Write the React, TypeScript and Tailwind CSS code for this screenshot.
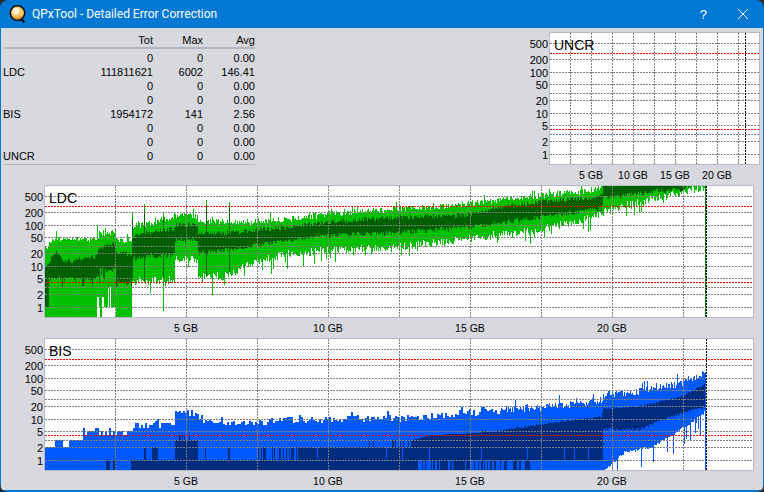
import React from "react";

// small seeded random so the noise is the same on every load
function makeRand(seed: number) {
  let a = seed;
  return () => {
    a = (a + 0x6d2b79f5) | 0;
    let t = Math.imul(a ^ (a >>> 15), 1 | a);
    t = (t + Math.imul(t ^ (t >>> 7), 61 | t)) ^ t;
    return ((t ^ (t >>> 14)) >>> 0) / 4294967296;
  };
}

type Pt = [number, number];

function env(points: Pt[], x: number) {
  for (let i = 1; i < points.length; i++) {
    if (x < points[i][0]) {
      const [x0, y0] = points[i - 1];
      const [x1, y1] = points[i];
      return y0 + ((y1 - y0) * (x - x0)) / (x1 - x0);
    }
  }
  return points[points.length - 1][1];
}

const PLOT_LEFT = 45;

// y values below are page pixels, the svg viewBox lines up with them
const ldcLightTop: Pt[] = [[45, 252], [50, 246], [60, 243], [96, 243], [99, 236], [115, 236], [116, 243], [131, 243], [132, 230], [150, 226], [175, 219], [186, 217], [197, 220], [198, 224], [250, 225], [290, 222], [330, 217], [400, 212], [430, 210], [470, 207], [510, 202], [540, 199], [601, 192], [602, 189], [640, 184], [697, 178], [705, 178]];
const ldcLightBottom: Pt[] = [[132, 278], [150, 276], [174, 276], [175, 254], [197, 256], [198, 272], [225, 272], [250, 260], [270, 254], [290, 250], [330, 246], [400, 243], [470, 235], [500, 230], [540, 226], [601, 211], [603, 205], [640, 198], [697, 185], [705, 185]];
const ldcDarkTop: Pt[] = [[45, 270], [49, 264], [55, 254], [65, 264], [95, 259], [100, 249], [115, 247], [116, 256], [131, 256], [132, 239], [174, 231], [175, 227], [197, 228], [198, 237], [250, 233], [290, 229], [330, 224], [400, 220], [470, 217], [500, 210], [540, 204], [601, 199], [603, 189], [660, 183], [705, 180]];
const ldcDarkBottom: Pt[] = [[45, 276], [95, 276], [100, 268], [115, 268], [116, 280], [131, 280], [132, 256], [174, 252], [175, 238], [197, 238], [198, 251], [250, 244], [290, 238], [330, 233], [400, 230], [470, 225], [500, 220], [540, 215], [601, 206], [603, 196], [640, 191], [680, 187], [705, 180]];

function ldcSeries() {
  const r = makeRand(7);
  let light = "";
  let dark = "";
  const upSpikes: Record<number, number> = { 56: 231, 97: 226, 132: 213, 144: 204, 163: 212, 206: 200, 229: 202 };
  for (let x = PLOT_LEFT; x < 705; x++) {
    const px = x + 0.5;
    let top = env(ldcLightTop, x) - r() * 6;
    if (r() < 0.1) top -= r() * 6;
    if (upSpikes[x]) top = upSpikes[x];
    let bottom = 318;
    if (x >= 132) {
      bottom = env(ldcLightBottom, x) + r() * 8;
      if (r() < 0.12) bottom += r() * 12;
      if (x === 212 || x === 163 || x === 271 || x === 287) bottom += 16;
    }
    if (x < 132) {
      if (x >= 97 && x < 116) bottom = x === 100 || x === 101 ? 318 : 307;
      if (x === 97 || x === 98 || x === 102 || x === 103) bottom = 297;
      if (x === 108 || x === 110) bottom = 287;
    }
    light += `M${px} ${top}V${bottom}`;
    let dt = env(ldcDarkTop, x) - r() * 5;
    let db = env(ldcDarkBottom, x) + r() * 5;
    if (x < 49) db = 307;
    if (x < 132 && r() < 0.2) db += r() * 12;
    if (upSpikes[x] && x > 130) {
      dt = upSpikes[x] + 6;
      db += 22;
    }
    dark += `M${px} ${dt}V${db}`;
  }
  return { light, dark };
}

function snap(y: number) {
  const v = Math.max(1, Math.round(Math.pow(10, (460 - y) / 41)));
  return 460 - 41 * Math.log10(v);
}

const bisTop: Pt[] = [[45, 447], [53, 447], [54, 440], [62, 440], [63, 447], [67, 447], [68, 440], [81, 440], [82, 434], [115, 432], [116, 436], [131, 436], [132, 426], [174, 425], [175, 414], [197, 414], [198, 424], [250, 424], [300, 421], [400, 420], [450, 416], [510, 411], [540, 409], [601, 402], [603, 396], [640, 393], [680, 385], [705, 375]];
const bisLightBottom: Pt[] = [[603, 470], [612, 462], [625, 450], [650, 446], [665, 438], [680, 428], [690, 422], [705, 410]];
const bisDarkTop: Pt[] = [[411, 440], [432, 435], [500, 432], [540, 425], [601, 418], [603, 410], [640, 407], [680, 398], [705, 385]];
const bisDarkBottom: Pt[] = [[603, 428], [640, 428], [670, 415], [705, 405]];

function bisSeries() {
  const r = makeRand(23);
  let light = "";
  let dark = "";
  let held = 0;
  for (let x = PLOT_LEFT; x < 705; x++) {
    const px = x + 0.5;
    if (x < 500 ? x % 2 === 1 || x === PLOT_LEFT : true) {
      let t = env(bisTop, x);
      if (x >= 82) {
        t -= r() * 7 - 2;
        if (r() < 0.1) t -= r() * 10;
      }
      held = x < 82 ? t : x < 200 ? snap(t) : t;
    }
    let bottom = 471;
    if (x >= 603) {
      bottom = env(bisLightBottom, x) + r() * 3;
      if (r() < 0.16) bottom += r() * 22;
    }
    light += `M${px} ${held}V${Math.min(bottom, 471)}`;

    const seg = (a: number, b: number) => {
      dark += `M${px} ${a}V${b}`;
    };
    if (x >= 603) {
      const dt = env(bisDarkTop, x) - r() * 2;
      seg(dt, env(bisDarkBottom, x) + r() * 3);
      continue;
    }
    // bottom row of blocks
    const pA = x < 106 ? 0 : x < 116 ? (x < 110 || x > 112 ? 1 : 0) : x < 131 ? 0 : x < 417 ? 1 : x < 470 ? 0.7 : x < 532 ? 0.3 : 0;
    if (r() < pA) seg(460, 471);
    // second row
    let pB = x < 258 ? 0 : x < 300 ? 0.55 : 0.97;
    if (x === 144 || x === 145 || (x > 151 && x < 158) || x === 205 || x === 228 || x === 229) pB = 1;
    if (r() < pB) seg(447, 460);
    // third row and the rising band above it
    if (x >= 175 && x < 198) {
      seg(x > 178 && x < 190 && r() < 0.5 ? 435 : 440, 460);
      if (x > 175) seg(460, 471);
    } else if (x >= 411) {
      seg(env(bisDarkTop, x) - (x > 480 ? r() * 2 : 0), 447);
    } else if (x >= 369 && r() < 0.18) {
      seg(440, 447);
    }
  }
  return { light, dark };
}

const ldc = ldcSeries();
const bis = bisSeries();

// log scale lines, offset from the top of a plot
const GRAY_LINES = [11, 27, 40, 52, 61, 68, 81, 93, 102, 109, 122];
const RED_LINES = [21, 97];
const Y_LABELS: [string, number][] = [["500", 11], ["200", 27], ["100", 40], ["50", 52], ["20", 68], ["10", 81], ["5", 93], ["2", 109], ["1", 122]];

type ChartProps = {
  name: string;
  left: number;
  width: number;
  top: number;
  step: number;
  labelsAt: [string, number][];
  endLine: number;
  endColor?: string;
  light?: string;
  dark?: string;
  lightColor?: string;
  darkColor?: string;
};

function Chart({ name, left, width, top, step, labelsAt, endLine, endColor, light, dark, lightColor, darkColor }: ChartProps) {
  const right = left + width;
  const verticals: number[] = [];
  for (let i = 1; left + i * step < endLine - 3 && i < 12; i++) verticals.push(left + i * step);
  return (
    <div className="flex flex-col">
      <div className="relative border border-[#b8b9c6] bg-white" style={{ width, height: 133 }}>
        <svg width={width - 2} height={131} viewBox={`${left + 1} ${top + 1} ${width - 2} 131`} className="block" shapeRendering="crispEdges">
          {light && <path d={light} stroke={lightColor} strokeWidth="1" fill="none" />}
          {dark && <path d={dark} stroke={darkColor} strokeWidth="1" fill="none" />}
          {endColor && <line x1={endLine - 0.5} x2={endLine - 0.5} y1={name === "BIS" ? top + 34 : top + 1} y2={top + 132} stroke={endColor} strokeWidth="1" />}
          {GRAY_LINES.map((y) => (
            <line key={y} x1={left + 1} x2={right - 1} y1={top + y + 0.5} y2={top + y + 0.5} stroke="#808080" strokeWidth="1" strokeDasharray="2 1" />
          ))}
          {verticals.map((x) => (
            <line key={x} x1={x + 0.5} x2={x + 0.5} y1={top + 1} y2={top + 132} stroke="#808080" strokeWidth="1" strokeDasharray="2 1" />
          ))}
          {RED_LINES.map((y) => (
            <line key={y} x1={left + 1} x2={right - 1} y1={top + y + 0.5} y2={top + y + 0.5} stroke="#ff0000" strokeWidth="1" strokeDasharray="2 1" />
          ))}
          <line x1={endLine + 0.5} x2={endLine + 0.5} y1={top + 1} y2={top + 132} stroke="#000000" strokeWidth="1" strokeDasharray="2 1" />
        </svg>
        <span className="absolute left-[4px] top-[3px] text-[14px] leading-[18px] text-black">{name}</span>
        {Y_LABELS.map(([t, y]) => (
          <span key={t} className="absolute right-[calc(100%+2px)] text-[11px] leading-[14px] text-black" style={{ top: y - 7 }}>
            {t}
          </span>
        ))}
      </div>
      <div className="relative h-[20px]">
        {labelsAt.map(([t, x]) => (
          <span key={t} className="absolute top-[3px] -translate-x-1/2 whitespace-nowrap text-[10.5px] leading-[14px] text-black" style={{ left: x - left }}>
            {t}
          </span>
        ))}
      </div>
    </div>
  );
}

const ROWS = [
  ["", "0", "0", "0.00"],
  ["LDC", "111811621", "6002", "146.41"],
  ["", "0", "0", "0.00"],
  ["", "0", "0", "0.00"],
  ["BIS", "1954172", "141", "2.56"],
  ["", "0", "0", "0.00"],
  ["", "0", "0", "0.00"],
  ["UNCR", "0", "0", "0.00"],
];

function StatsTable() {
  return (
    <div className="ml-[2px] mt-[5px] w-[252px] text-[11px] leading-[14px] text-black">
      <div className="grid h-[14px] grid-cols-[50px_100px_50px_52px] text-right">
        <span />
        <span>Tot</span>
        <span>Max</span>
        <span>Avg</span>
      </div>
      <div className="mb-[2px] ml-[1px] h-[2px] bg-[#b4b5c0]" />
      {ROWS.map((row, i) => (
        <div key={i} className="grid h-[14px] grid-cols-[50px_100px_50px_52px] text-right">
          <span className="text-left">{row[0]}</span>
          <span>{row[1]}</span>
          <span>{row[2]}</span>
          <span>{row[3]}</span>
        </div>
      ))}
      <div className="ml-[1px] mt-[1px] h-[1px] bg-[#b4b5c0]" />
    </div>
  );
}

function AppIcon() {
  return (
    <svg width="20" height="20" viewBox="0 0 20 20" className="ml-[7px]">
      <path d="M13 15l3.5 3.5" stroke="#000" strokeWidth="2" />
      <circle cx="9.5" cy="9" r="7.2" fill="#f6c66a" stroke="#111" strokeWidth="1.6" />
      <circle cx="8" cy="7" r="3.4" fill="#fff3d6" />
      <path d="M5 13c2 2 6 2 8-1" stroke="#e08a2c" strokeWidth="1.6" fill="none" />
    </svg>
  );
}

export default function App() {
  return (
    <div className="h-[492px] w-[764px] overflow-hidden bg-[#2a2a2a] font-['Liberation_Sans',sans-serif]">
      <div className="flex h-full w-full flex-col overflow-hidden rounded-[8px] bg-[#0078d4] px-[1px] pb-[2px]">
        <div className="flex h-[28px] shrink-0 items-center text-white">
          <AppIcon />
          <span className="ml-[4px] font-['Roboto',sans-serif] text-[12px] leading-none">QPxTool - Detailed Error Correction</span>
          <span className="ml-auto mr-[30px] text-[13px] leading-none">?</span>
          <svg width="12" height="12" viewBox="0 0 12 12" className="mr-[14px]">
            <path d="M1 1l10 10M11 1L1 11" stroke="#fff" strokeWidth="1" />
          </svg>
        </div>
        <div className="flex min-h-0 flex-1 flex-col bg-[#d8d9df]">
          <div className="flex h-[157px] items-start justify-between">
            <StatsTable />
            <div className="mr-[3px] mt-[4px]">
              <Chart
                name="UNCR"
                left={549}
                width={211}
                top={32}
                step={21}
                endLine={745}
                labelsAt={[["5 GB", 591], ["10 GB", 633], ["15 GB", 675], ["20 GB", 717]]}
              />
            </div>
          </div>
          <div className="ml-[43px]">
            <Chart
              name="LDC"
              left={44}
              width={710}
              top={185}
              step={71}
              endLine={706}
              endColor="#008000"
              light={ldc.light}
              dark={ldc.dark}
              lightColor="#00c000"
              darkColor="#006000"
              labelsAt={[["5 GB", 186], ["10 GB", 328], ["15 GB", 470], ["20 GB", 612]]}
            />
            <Chart
              name="BIS"
              left={44}
              width={710}
              top={338}
              step={71}
              endLine={706}
              endColor="#0058ff"
              light={bis.light}
              dark={bis.dark}
              lightColor="#0058ff"
              darkColor="#002c80"
              labelsAt={[["5 GB", 186], ["10 GB", 328], ["15 GB", 470], ["20 GB", 612]]}
            />
          </div>
        </div>
      </div>
    </div>
  );
}
